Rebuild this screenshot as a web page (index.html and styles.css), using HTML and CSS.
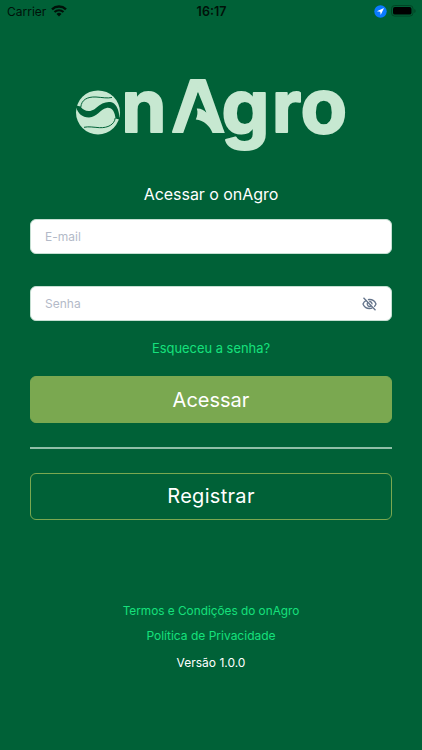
FILE: index.html
```html
<!DOCTYPE html>
<html lang="pt-BR">
<head>
    <meta charset="UTF-8">
    <meta name="viewport" content="width=device-width, initial-scale=1.0">
    <title>onAgro</title>
    <link rel="stylesheet" href="styles.css">
</head>
<body>
    <header class="status-bar">
        <div class="carrier">
            <span>Carrier</span>
            <svg width="16" height="12" viewBox="0 0 16 12" fill="none" stroke="#001209">
                <path d="M1 4.3a10.2 10.2 0 0 1 14 0" stroke-width="2.4"/>
                <path d="M3.5 7a6.5 6.5 0 0 1 9 0" stroke-width="2.1"/>
                <path d="M5.5 9a3.6 3.6 0 0 1 5 0L8 11.6z" fill="#001209" stroke="none"/>
            </svg>
        </div>
        <span class="clock">16:17</span>
        <div class="indicators">
            <svg width="13" height="13" viewBox="0 0 13 13">
                <circle cx="6.5" cy="6.5" r="6.2" fill="#0a7aff"/>
                <path d="M10 3 2.9 6.3l3.3.5.5 3.3z" fill="#fff"/>
            </svg>
            <svg width="25" height="12" viewBox="0 0 25 12">
                <rect x=".5" y=".5" width="21.5" height="10.6" rx="3.2" fill="none" stroke="#004525"/>
                <rect x="2" y="2" width="18.5" height="7.6" rx="1.9" fill="#000"/>
                <path d="M23.3 4v4q1.3-.6 1.3-2t-1.3-2z" fill="#004525"/>
            </svg>
        </div>
    </header>

    <main>
        <svg class="logo" width="276" height="82" viewBox="74 74 276 82" role="img" aria-label="onAgro">
            <!-- emblem: two leaves forming the first letter -->
            <circle cx="98" cy="112.400" r="22" class="mint"/>
            <path class="cut" d="M74 105L80.500 106.500C84 111.500 90 113 96 108C102 102.500 109 100.500 114 103.500C117.500 106.500 119 111 119.300 117L121.500 120L115.500 118.500C115 112 112 107 106.500 108C100 109.500 97 117 89 117.500C82 117.500 78 113 76.300 108z"/>
            <path class="vein" d="M80.800 107C81.500 100 87 96.600 96 97C103 97.500 107 98.500 112 97.500"/>
            <path class="vein" d="M115.200 118C114.500 124.500 108 128 99.600 127.700C93 127.200 89 126.300 84 127.300"/>
            <!-- wordmark -->
            <g class="wordmark">
                <text y="132" x="121.500">n</text>
                <text y="132" x="171.300">A</text>
                <text y="134" x="221.500" class="wide">g</text>
                <text y="132" x="272">r</text>
                <text y="132.500" x="300.500" class="wide">o</text>
            </g>
            <path class="cut" d="M198 92L206 111.500L216.500 135H182.500z"/>
            <path class="mint" d="M196.800 108.500C201 108.300 204 110 206.500 112.800L205 106.500L211 106L224.800 133H212.500C210 126 204 120.500 195.800 119.500C197.500 116 198 112 196.800 108.500z"/>
        </svg>

        <form class="login">
            <h1>Acessar o onAgro</h1>
            <div class="field">
                <input type="email" placeholder="E-mail">
            </div>
            <div class="field">
                <input type="password" placeholder="Senha">
                <svg width="15" height="14" viewBox="0 0 15 14" fill="none" stroke="#64748b" stroke-width="1.300">
                    <path d="M4.400 3.400C2.700 4.200 1.500 5.500 1 7c1 2.800 3.500 4.500 6.500 4.500 1 0 2-.2 2.900-.6M5.900 2.700q.8-.2 1.600-.2c3 0 5.500 1.700 6.500 4.500a6.500 6.500 0 0 1-1.800 2.700"/>
                    <path d="M5.700 5.400a2.500 2.500 0 0 0 3.500 3.500M7.200 4.500A2.500 2.500 0 0 1 10 7.300M1.500.8l12 12.400"/>
                </svg>
            </div>
            <a class="forgot" href="#">Esqueceu a senha?</a>
            <button class="btn btn-primary" type="button">Acessar</button>
            <hr>
            <button class="btn btn-outline" type="button">Registrar</button>
        </form>
    </main>

    <footer>
        <a class="terms" href="#">Termos e Condições do onAgro</a>
        <a class="privacy" href="#">Política de Privacidade</a>
        <p>Versão 1.0.0</p>
    </footer>
</body>
</html>
```

FILE: styles.css
```css
* {
    box-sizing: border-box;
}
body {
    margin: 0;
    height: 750px;
    overflow: hidden;
    background-color: #006137;
    color: #fff;
    font-family: Inter, "Liberation Sans", sans-serif;
}
svg {
    display: block;
}
a {
    color: #16e07c;
    text-decoration: none;
}
.status-bar {
    display: grid;
    grid-template-columns: 1fr auto 1fr;
    align-items: center;
    height: 22px;
    padding: 0 6px 0 7px;
    color: #001209;
    font-size: 12px;
}
.carrier {
    display: flex;
    align-items: center;
    gap: 5px;
}
.clock {
    font-size: 12.5px;
    font-weight: 600;
}
.indicators {
    display: flex;
    align-items: center;
    justify-content: flex-end;
    gap: 4px;
}
main {
    padding: 52px 30px 0;
}
.logo {
    margin-left: 44px;
    overflow: visible;
}
.mint {
    fill: #c7e8d1;
}
.cut {
    fill: #006137;
}
.vein {
    fill: none;
    stroke: #006137;
    stroke-width: 1;
}
.wordmark {
    fill: #c7e8d1;
    stroke: #c7e8d1;
    stroke-width: 2;
    stroke-linejoin: round;
    font-size: 72px;
    font-weight: 700;
}
.wordmark .wide {
    font-size: 76px;
}
.login {
    display: flex;
    flex-direction: column;
}
h1 {
    margin: 28px 0 15px;
    font-size: 16px;
    font-weight: 400;
    line-height: 20px;
    letter-spacing: -0.05px;
    text-align: center;
}
.field {
    display: flex;
    align-items: center;
    height: 35px;
    margin-bottom: 32px;
    padding: 0 14px;
    background-color: #fff;
    border: 1px solid #c5dfd2;
    border-radius: 6px;
}
.field input {
    flex: 1;
    min-width: 0;
    padding: 0;
    border: 0;
    outline: 0;
    background: none;
    font: 12px Inter, "Liberation Sans", sans-serif;
}
.field input::placeholder {
    color: #b3bac8;
}
.forgot {
    margin: -12px 0 19px;
    font-size: 12.9px;
    line-height: 16px;
    text-align: center;
}
.btn {
    height: 47px;
    padding: 0;
    border: 1px solid #7aa850;
    border-radius: 6px;
    color: #fff;
    font: 20px Inter, "Liberation Sans", sans-serif;
}
.btn-primary {
    background-color: #7aa850;
}
.btn-outline {
    padding-bottom: 1px;
    background: none;
    letter-spacing: 0.3px;
}
hr {
    width: 100%;
    height: 2px;
    margin: 24px 0;
    border: 0;
    background-color: #8fbfa7;
}
footer {
    display: flex;
    flex-direction: column;
    align-items: center;
    margin-top: 83px;
    font-size: 12px;
    line-height: 16px;
}
footer a {
    margin-bottom: 9px;
}
.terms {
    font-size: 11.8px;
}
footer p {
    margin: 2px 0 0;
}
```
